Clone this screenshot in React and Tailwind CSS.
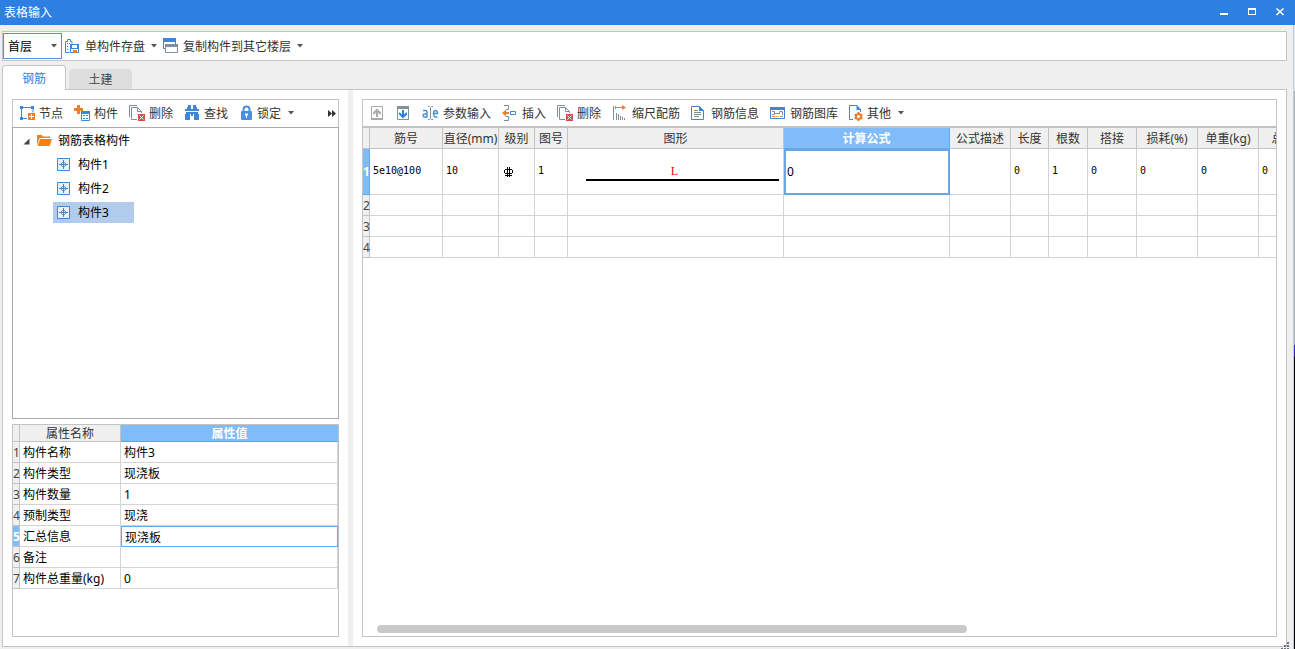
import { useState } from 'react';

const components = ['构件1', '构件2', '构件3'];

const properties = [
  ['构件名称', '构件3'],
  ['构件类型', '现浇板'],
  ['构件数量', '1'],
  ['预制类型', '现浇'],
  ['汇总信息', '现浇板'],
  ['备注', ''],
  ['构件总重量(kg)', '0'],
];

const columns = [
  { label: '筋号', width: 'w-[73px]', value: '5e10@100' },
  { label: '直径(mm)', width: 'w-[56px]', value: '10' },
  { label: '级别', width: 'w-[36px]', value: 'grade' },
  { label: '图号', width: 'w-[33px]', value: '1' },
  { label: '图形', width: 'w-[216px]', value: 'shape' },
  { label: '计算公式', width: 'w-[166px]', value: '0', active: true },
  { label: '公式描述', width: 'w-[61px]', value: '' },
  { label: '长度', width: 'w-[38px]', value: '0' },
  { label: '根数', width: 'w-[39px]', value: '1' },
  { label: '搭接', width: 'w-[49px]', value: '0' },
  { label: '损耗(%)', width: 'w-[61px]', value: '0' },
  { label: '单重(kg)', width: 'w-[61px]', value: '0' },
  { label: '总重(kg)', width: 'w-[71px]', value: '0' },
];

// 16px icon canvas, crisp edges by default
function Icon({ children, w = 16, h = 16, smooth = false }) {
  return (
    <svg
      className="shrink-0"
      width={w}
      height={h}
      viewBox={`0 0 ${w} ${h}`}
      fill="none"
      shapeRendering={smooth ? 'auto' : 'crispEdges'}
      aria-hidden="true"
    >
      {children}
    </svg>
  );
}

function Caret() {
  return (
    <Icon w={6} h={4} smooth>
      <path d="M0 0h6L3 3.5z" fill="#555" />
    </Icon>
  );
}

function SaveIcon() {
  return (
    <Icon smooth>
      <path d="M4.5 14.500h-4v-11h2v-2h3v2h1.500v2" stroke="#3c87d8" />
      <path d="M2 5h1v1H2zM4 5h1v1H4zM2 8h1v1H2zM2 11h1v1H2z" fill="#3c87d8" />
      <path d="M5.500 6.500h8v8h-8z" fill="#fff" stroke="#3c87d8" />
      <path d="M5 6h2v5H5zM12 6h2v5h-2zM5 10h9v1H5z" fill="#3c87d8" />
      <path d="M8 12h4v3H8z" fill="#f07a20" />
    </Icon>
  );
}

function CopyFloorIcon() {
  return (
    <Icon smooth>
      <path d="M.5.5h12v10H.5z" fill="#fff" stroke="#3c87d8" />
      <path d="M0 0h13v4H0z" fill="#3c87d8" />
      <path d="M2.500 6.500h12v8h-12z" fill="#fff" stroke="#80909a" />
      <path d="M2 6h13v3H2z" fill="#80909a" />
    </Icon>
  );
}

function NodeIcon() {
  return (
    <Icon smooth>
      <path d="M2.500 2v11M2 13.500h6M2 2.500h12v5" stroke="#3c87d8" />
      <path d="M1 1h3v3H1zM12 1h3v3h-3zM1 12h3v3H1z" fill="#3c87d8" />
      <path d="M9 8h7v7H9z" fill="#ef7d2e" />
      <path d="M10 11.500h5M12.500 9v5" stroke="#fff" />
    </Icon>
  );
}

function ComponentIcon() {
  return (
    <Icon smooth>
      <path d="M3 0h3v3h3v3H6v3H3V6H0V3h3z" fill="#ef7d2e" />
      <path d="M7.500 6.500h8v9h-8z" fill="#fff" stroke="#3c87d8" />
      <path d="M7 6h9v3H7z" fill="#3c87d8" />
      <path d="M9 10h2v1H9zM12 10h2v1h-2zM9 13h2v1H9zM12 13h2v1h-2z" fill="#3c87d8" />
    </Icon>
  );
}

function DeleteIcon() {
  return (
    <Icon smooth>
      <path d="M.5 12V.5H8" stroke="#80909a" />
      <path d="M2.500 2.500h6l4 4v8h-10z" fill="#fff" stroke="#80909a" />
      <path d="M8.500 2.500v4h4" stroke="#80909a" />
      <path d="M8 8h8v8H8z" fill="#fff" />
      <path d="M9 9h7v7H9z" fill="#d9484c" />
      <path d="M10.500 10.500l4 4M14.500 10.500l-4 4" stroke="#fff" />
    </Icon>
  );
}

function FindIcon() {
  return (
    <Icon smooth>
      <path
        d="M4 0h3v2H4zM9 0h3v2H9zM3 2h4v2h2V2h4v2h2v2H1V4h2zM2 7h5v2H2zM9 7h5v2H9zM1 9h5v6H1zM10 9h5v6h-5zM7 7h2v4H7z"
        fill="#3c87d8"
      />
    </Icon>
  );
}

function LockIcon() {
  return (
    <Icon w={14} smooth>
      <path d="M4.500 7V4.500a3 3 0 0 1 6 0V7" stroke="#4a90e2" strokeWidth="2" />
      <rect x="2" y="6" width="11" height="9" rx="1" fill="#4a90e2" />
      <path d="M6 8.500h3v2H8v2.500H7v-2.500H6z" fill="#fff" />
    </Icon>
  );
}

function MoveIcon({ down = false }) {
  return (
    <Icon w={15} smooth>
      <path d="M2.500 1.500h11v13h-11z" stroke={down ? '#80909a' : '#aaa'} />
      <path d={down ? 'M2 1h12v3H2z' : 'M2 13h12v2H2z'} fill={down ? '#80909a' : '#aaa'} />
      <path
        d={down ? 'M7 5h2v4.500l2-2h1v2L8 13.500l-4-4v-2h1l2 2z' : 'M7 12h2V7.500l2 2h1v-2l-4-4-4 4v2h1l2-2z'}
        fill={down ? '#2f80d8' : '#aaa'}
      />
    </Icon>
  );
}

function ParamIcon() {
  return (
    <Icon w={18} smooth>
      <path
        d="M2 5.500h2.500Q6 5.500 6 7v5H3.500Q2 12 2 10.500T3.500 9H6M12.500 8.500h4Q16.500 5.500 14.500 5.500T12.500 8.500t2 3.500h2"
        stroke="#4a90d9"
        strokeWidth="1.400"
      />
      <path
        d="M7 1.500h1.500l1 1 1-1H12M9.500 2.500v11M7 14.500h1.500l1-1 1 1H12"
        stroke="#80909a"
      />
    </Icon>
  );
}

function InsertIcon() {
  return (
    <Icon smooth>
      <path d="M2 .5h4.500v4H4M2 15.500h4.500v-4H4" stroke="#80909a" />
      <path d="M0 8l4-3.500V7h3v2H4v2.500z" fill="#ef7d2e" />
      <path d="M8.500 6.500h5v3h-5z" fill="#fff" stroke="#3c87d8" />
    </Icon>
  );
}

function ScaleIcon() {
  return (
    <Icon smooth>
      <path d="M1.500 1v14M4.500 8v7M6.500 9v6M8.500 11v4M10.500 12v3M12.500 13v2" stroke="#80909a" />
      <path d="M3 2.500h9M3.500 1v3" stroke="#ef7d2e" />
      <path d="M10 0l4 2.500L10 5z" fill="#ef7d2e" />
    </Icon>
  );
}

function InfoIcon() {
  return (
    <Icon smooth>
      <path d="M.5 1.500h8l4 4v9H.5z" stroke="#3c87d8" />
      <path d="M8 1v5h5z" fill="#3c87d8" />
      <path d="M3 5.500h4M3 7.500h7M3 9.500h7M3 11.500h5" stroke="#80909a" />
    </Icon>
  );
}

function LibraryIcon() {
  return (
    <Icon smooth>
      <path d="M.5 2.500h14v11H.5z" stroke="#3c87d8" />
      <path d="M0 2h15v3H0z" fill="#3c87d8" />
      <path d="M2 6.500h2.500v3H2M4.500 8.500h5M12.500 10V6.500h-3V9" stroke="#80909a" />
      <path d="M2 11h3v1H2z" fill="#ef7d2e" />
      <path d="M6 11h3v1H6z" fill="#e4bb38" />
      <path d="M10 11h3v1h-3z" fill="#66ad70" />
    </Icon>
  );
}

function OtherIcon() {
  return (
    <Icon w={14} smooth>
      <path d="M4 14.500H.5V.5H8L11.500 4.500V7" stroke="#3c87d8" />
      <path d="M7.500 0v5H12z" fill="#3c87d8" />
      <g stroke="#ef7d2e" strokeWidth="2">
        <circle cx="9.500" cy="11.500" r="2.500" />
        <path d="M9.500 7v2M9.500 14v2M5.600 9.300l1.700 1M11.700 12.700l1.700 1M5.600 13.700l1.700-1M11.700 10.300l1.700-1" />
      </g>
    </Icon>
  );
}

function FolderIcon() {
  return (
    <Icon w={15} h={12} smooth>
      <path d="M0 10V0h5l1 1.500h7V3H2.500z" fill="#ff7f0e" />
      <path d="M3 4h12l-2.500 7H.5z" fill="#ff7f0e" />
    </Icon>
  );
}

function NodeMark() {
  return (
    <Icon w={13} h={13} smooth>
      <path d="M.5.5h12v12H.5z" fill="#e2f2fe" stroke="#3c87d8" />
      <path d="M6.500 2v9M2 6.500h9" stroke="#3c87d8" />
      <path d="M6.500 3.500l3 3-3 3-3-3z" stroke="#3c87d8" strokeWidth=".8" />
    </Icon>
  );
}

function ToolButton({ icon, label, title, caret = false }) {
  return (
    <button
      type="button"
      aria-label={title}
      className="flex h-5 shrink-0 items-center gap-1 pr-1 pl-[3px] whitespace-nowrap text-[#333] hover:bg-[#e5f1fb]"
    >
      {icon}
      {label && <span className="pt-[2px]">{label}</span>}
      {caret && (
        <span className="pl-[3px]">
          <Caret />
        </span>
      )}
    </button>
  );
}

function TitleBar() {
  return (
    <header className="flex h-[25px] shrink-0 items-center justify-between bg-[#2d7fe2] pr-[7px] pl-1 text-white">
      <h1>表格输入</h1>
      <div className="flex gap-3">
        <button type="button" aria-label="最小化">
          <Icon h={15}>
            <path d="M4 8h8v2H4z" fill="#fff" />
          </Icon>
        </button>
        <button type="button" aria-label="最大化">
          <Icon h={15}>
            <path d="M4 3h8v7H4zM5 5v4h6V5z" fill="#fff" fillRule="evenodd" />
          </Icon>
        </button>
        <button type="button" aria-label="关闭">
          <Icon h={15} smooth>
            <path d="M4.500 3.500l7 6.500M11.500 3.500l-7 6.500" stroke="#fff" strokeWidth="1.700" />
          </Icon>
        </button>
      </div>
    </header>
  );
}

function FloorBar() {
  return (
    <div className="mr-[6px] flex h-[30px] shrink-0 items-center border border-[#c3c3c8] bg-white">
      <div className="relative flex h-[26px] w-[59px] items-center border border-[#5b8ede]">
        <select
          aria-label="楼层"
          className="h-full w-full appearance-none bg-white pt-[2px] pl-1 text-black outline-none"
        >
          <option>首层</option>
        </select>
        <span className="pointer-events-none absolute right-1">
          <Caret />
        </span>
      </div>
      <div className="flex items-center">
        <button type="button" className="flex items-center gap-1 pl-[3px] text-[#333]">
          <SaveIcon />
          <span className="pt-[2px] pr-[2px]">单构件存盘</span>
          <Caret />
        </button>
        <button type="button" className="flex items-center gap-1 pl-[6px] text-[#333]">
          <CopyFloorIcon />
          <span className="pt-[2px] pr-[2px]">复制构件到其它楼层</span>
          <Caret />
        </button>
      </div>
    </div>
  );
}

function ComponentTree() {
  const [selected, setSelected] = useState('构件3');

  return (
    <div className="flex-1 border border-[#a9a9ae] bg-white pt-px text-black">
      <div className="flex h-6 items-center pl-[10px]">
        <Icon w={7} h={7} smooth>
          <path d="M6.500.5v6h-6z" fill="#444" />
        </Icon>
        <span className="pr-[6px] pl-[7px]">
          <FolderIcon />
        </span>
        钢筋表格构件
      </div>
      <ul>
        {components.map((name) => (
          <li key={name} className="flex h-6 pt-px pl-10">
            <button
              type="button"
              onClick={() => setSelected(name)}
              className={`flex h-[21px] w-[81px] items-center gap-2 pl-1 ${selected === name ? 'bg-[#b1cbed]' : ''}`}
            >
              <NodeMark />
              {name}
            </button>
          </li>
        ))}
      </ul>
    </div>
  );
}

function PropertyTable() {
  return (
    <div className="mt-[5px] h-[213px] shrink-0 border border-[#c3c3c3] bg-white">
      <table className="w-full table-fixed border-separate border-spacing-0 text-black">
        <thead>
          <tr className="h-[17px] leading-[14px]">
            <th className="w-[7px] border-r border-b border-[#c3c3c3] bg-[#f0f0f0] p-0" />
            <th className="w-[101px] border-r border-b border-[#c3c3c3] bg-[#f0f0f0] p-0 pt-[2px] font-normal text-[#333]">
              属性名称
            </th>
            <th className="border-b border-[#5fa3e8] bg-[#80bbfa] p-0 pt-[2px] font-bold text-white">
              属性值
            </th>
          </tr>
        </thead>
        <tbody>
          {properties.map(([name, value], i) => {
            const active = i === 4;
            return (
              <tr key={name} className="h-[21px]">
                <th
                  scope="row"
                  className={`border-r border-b border-[#c3c3c3] p-0 pt-[2px] ${active ? 'bg-[#80bbfa] font-bold text-white' : 'bg-[#f0f0f0] font-normal text-[#444]'}`}
                >
                  {i + 1}
                </th>
                <td className="border-r border-b border-[#d4d4d4] p-0 pt-[2px] pl-[3px]">
                  {name}
                </td>
                {active ? (
                  <td className="p-0">
                    <input
                      aria-label={name}
                      defaultValue={value}
                      className="block h-[21px] w-full border border-[#67a7e8] px-[3px] outline-none"
                    />
                  </td>
                ) : (
                  <td className="border-r border-b border-[#d4d4d4] p-0 pt-[2px] pl-[3px]">
                    {value}
                  </td>
                )}
              </tr>
            );
          })}
        </tbody>
      </table>
    </div>
  );
}

function BarCell({ column }) {
  if (column.active) {
    return (
      <td className="p-0">
        <input
          aria-label={column.label}
          defaultValue={column.value}
          className="block h-[46px] w-full border-2 border-[#67a7e8] px-px pb-[2px] font-['Noto_Sans','Noto_Sans_CJK_SC',sans-serif] text-xs outline-none"
        />
      </td>
    );
  }
  if (column.value === 'shape') {
    return (
      <td className="border-r border-b border-[#d4d4d4] p-0 pb-1 text-center">
        <div className="mr-1 ml-[18px] border-b-2 border-black pt-1 pr-4 font-['Liberation_Serif',serif] text-xs text-[#f00]">
          L
        </div>
      </td>
    );
  }
  // HRB400 grade mark
  if (column.value === 'grade') {
    return (
      <td className="border-r border-b border-[#d4d4d4] p-0 pl-[5px]">
        <Icon w={9} h={10}>
          <path
            d="M3 0h1v10H3zM5 0h1v10H5zM1 2h7v1H1zM0 3h1v3H0zM8 3h1v3H8zM1 6h7v1H1zM1 8h7v1H1z"
            fill="#000"
          />
        </Icon>
      </td>
    );
  }
  return (
    <td className="border-r border-b border-[#d4d4d4] p-0 pb-[2px] pl-[3px]">{column.value}</td>
  );
}

function BarTable() {
  return (
    <table className="w-[967px] table-fixed border-separate border-spacing-0">
      <thead>
        <tr className="h-[21px]">
          <th className="w-[7px] border-r border-b border-[#c3c3c3] bg-[#f0f0f0] p-0" />
          {columns.map((c) => (
            <th
              key={c.label}
              className={`border-r border-b p-0 pt-[2px] whitespace-nowrap ${c.width} ${c.active ? 'border-[#67a7e8] bg-[#80bbfa] font-bold text-white' : 'border-[#c3c3c3] bg-[#f0f0f0] font-normal text-[#333]'}`}
            >
              {c.label}
            </th>
          ))}
        </tr>
      </thead>
      <tbody>
        <tr className="h-[46px] font-['DejaVu_Sans_Mono',monospace] text-[10px] text-black">
          <th
            scope="row"
            className="border-r border-b border-[#67a7e8] bg-[#80bbfa] p-0 font-['Noto_Sans',sans-serif] text-xs text-white"
          >
            1
          </th>
          {columns.map((c) => (
            <BarCell key={c.label} column={c} />
          ))}
        </tr>
        {[2, 3, 4].map((n) => (
          <tr key={n} className="h-[21px]">
            <th
              scope="row"
              className="border-r border-b border-[#c3c3c3] bg-[#f0f0f0] p-0 pt-[2px] font-normal text-[#444]"
            >
              {n}
            </th>
            {columns.map((c) => (
              <td key={c.label} className="border-r border-b border-[#d4d4d4] p-0" />
            ))}
          </tr>
        ))}
      </tbody>
    </table>
  );
}

function BarPanel() {
  return (
    <section className="flex min-w-0 flex-1 flex-col border border-[#c3c3c8] bg-white">
      <div className="flex h-[28px] shrink-0 items-center gap-1 border-b-2 border-[#c3c3c3] pl-[3px]">
        <ToolButton icon={<MoveIcon />} title="上移" />
        <ToolButton icon={<MoveIcon down />} title="下移" />
        <ToolButton icon={<ParamIcon />} label="参数输入" />
        <ToolButton icon={<InsertIcon />} label="插入" />
        <ToolButton icon={<DeleteIcon />} label="删除" />
        <ToolButton icon={<ScaleIcon />} label="缩尺配筋" />
        <ToolButton icon={<InfoIcon />} label="钢筋信息" />
        <ToolButton icon={<LibraryIcon />} label="钢筋图库" />
        <ToolButton icon={<OtherIcon />} label="其他" caret />
      </div>
      <div className="min-h-0 flex-1 overflow-hidden">
        <BarTable />
      </div>
      <div className="flex h-[11px] shrink-0 px-[14px]">
        <div className="h-2 w-2/3 rounded-full bg-[#c9c9c9]" />
      </div>
    </section>
  );
}

export default function App() {
  const [tab, setTab] = useState('钢筋');

  return (
    <div className="relative flex h-screen flex-col bg-[#efefef] font-['Noto_Sans','Noto_Sans_CJK_SC',sans-serif] text-xs">
      <TitleBar />
      <div className="flex min-h-0 flex-1">
        <div className="flex min-w-0 flex-1 flex-col pt-[6px] pl-[2px]">
          <FloorBar />
          <div className="mt-1 flex h-6 shrink-0 items-end gap-[3px]">
            {['钢筋', '土建'].map((name) => (
              <button
                key={name}
                type="button"
                onClick={() => setTab(name)}
                className={
                  tab === name
                    ? 'z-10 -mb-px h-[25px] w-16 rounded-t-sm border border-b-0 border-[#c3c3c8] bg-white pt-px text-[#2d7fe2]'
                    : 'h-5 w-[63px] rounded-t-sm bg-[#dedede] pt-[2px] text-[#444]'
                }
              >
                {name}
              </button>
            ))}
          </div>
          <main className="mr-[6px] mb-[2px] flex min-h-0 flex-1 border border-[#c3c3c8] bg-white">
            <div className="flex w-[345px] shrink-0 flex-col p-[9px]">
              <div className="flex h-[28px] shrink-0 items-center gap-1 border border-b-0 border-[#c3c3c8] pr-[2px] pb-px pl-[3px]">
                <ToolButton icon={<NodeIcon />} label="节点" />
                <ToolButton icon={<ComponentIcon />} label="构件" />
                <ToolButton icon={<DeleteIcon />} label="删除" />
                <ToolButton icon={<FindIcon />} label="查找" />
                <ToolButton icon={<LockIcon />} label="锁定" caret />
                <button type="button" aria-label="更多" className="ml-auto">
                  <Icon w={8} h={7} smooth>
                    <path d="M0 0l4 3.500L0 7zM4 0l4 3.500L4 7z" fill="#333" />
                  </Icon>
                </button>
              </div>
              <ComponentTree />
              <PropertyTable />
            </div>
            <div className="w-[5px] shrink-0 bg-[#efefef]" />
            <div className="flex min-w-0 flex-1 p-[9px]">
              <BarPanel />
            </div>
          </main>
        </div>
        <div className="flex w-[2px] shrink-0 flex-col border-l border-[#c3c8dc]">
          <div className="h-[66px] bg-[#e2e6f6]" />
          <div className="h-[254px] bg-[#aab0c0]" />
          <div className="h-3 bg-[#3a22c8]" />
          <div className="flex-1 bg-black" />
        </div>
      </div>
      {/* Resize grip */}
      <div className="absolute right-[5px] bottom-0">
        <Icon w={9} h={7}>
          <path
            d="M6 0h2v2H6zM3 3h2v2H3zM6 3h2v2H6zM0 6h2v1H0zM3 6h2v1H3zM6 6h2v1H6z"
            fill="#6f7680"
          />
        </Icon>
      </div>
    </div>
  );
}
